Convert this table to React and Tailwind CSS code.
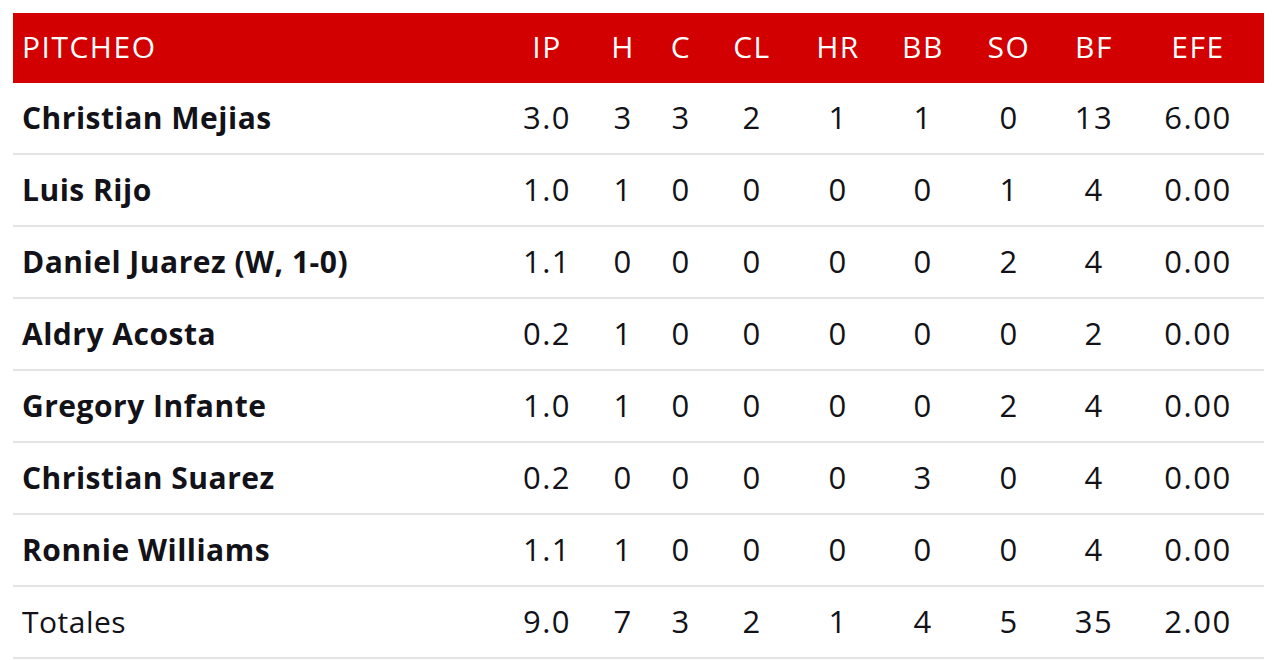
const COLS = ["IP", "H", "C", "CL", "HR", "BB", "SO", "BF", "EFE"];

const ROWS = [
  { name: "Christian Mejias", stats: ["3.0", "3", "3", "2", "1", "1", "0", "13", "6.00"] },
  { name: "Luis Rijo", stats: ["1.0", "1", "0", "0", "0", "0", "1", "4", "0.00"] },
  { name: "Daniel Juarez (W, 1-0)", stats: ["1.1", "0", "0", "0", "0", "0", "2", "4", "0.00"] },
  { name: "Aldry Acosta", stats: ["0.2", "1", "0", "0", "0", "0", "0", "2", "0.00"] },
  { name: "Gregory Infante", stats: ["1.0", "1", "0", "0", "0", "0", "2", "4", "0.00"] },
  { name: "Christian Suarez", stats: ["0.2", "0", "0", "0", "0", "3", "0", "4", "0.00"] },
  { name: "Ronnie Williams", stats: ["1.1", "1", "0", "0", "0", "0", "0", "4", "0.00"] },
];

const TOTALS = ["9.0", "7", "3", "2", "1", "4", "5", "35", "2.00"];

const grid = "grid grid-cols-[496px_76px_76px_40px_102px_70px_100px_72px_98px_110px_1fr] items-center";

function StatRow({ name, stats, bold }) {
  return (
    <div className={`${grid} h-[72px] border-b-2 border-[#e4e4e4] pb-[1px] text-[#121218]`}>
      <div className={`pl-[9px] text-[30px] ${bold ? "font-bold tracking-[0.5px]" : "font-normal tracking-[0.5px]"}`}>{name}</div>
      {stats.map((s, i) => (
        <div key={i} className="text-center text-[31px] tracking-[1.5px]">{s}</div>
      ))}
      <div />
    </div>
  );
}

export default function App() {
  return (
    <div className="min-h-[660px] bg-white px-[13px] pt-[13px] font-['Open_Sans',sans-serif]">
      <div className={`${grid} h-[70px] bg-[#d20000] pb-[4px] text-[30px] tracking-[1.5px] text-white`}>
        <div className="pl-[9px]">PITCHEO</div>
        {COLS.map((c) => (
          <div key={c} className="text-center">{c}</div>
        ))}
        <div />
      </div>
      {ROWS.map((r) => (
        <StatRow key={r.name} name={r.name} stats={r.stats} bold />
      ))}
      <StatRow name="Totales" stats={TOTALS} />
    </div>
  );
}
